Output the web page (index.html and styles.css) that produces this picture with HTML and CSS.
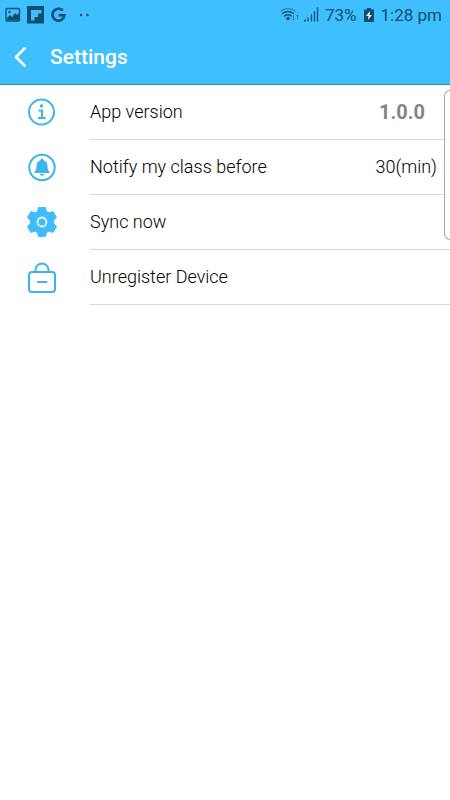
FILE: index.html
```html
<!DOCTYPE html>
<html lang="en">
<head>
<meta charset="utf-8">
<meta name="viewport" content="width=device-width, initial-scale=1">
<title>Settings</title>
<link rel="stylesheet" href="styles.css">
</head>
<body>
<header class="top">
  <div class="status">
    <div class="notices">
      <svg width="16" height="16" viewBox="0 0 16 16" aria-hidden="true"><rect x="1" y="1.500" width="13.500" height="12.500" rx="1" fill="none" stroke="currentColor" stroke-width="1.300"/><path d="M2 11l3-3 2 2 3-4 2 2 2-2v7H2z" fill="currentColor"/><circle cx="4.500" cy="5" r="1.200" fill="currentColor"/></svg>
      <svg width="18" height="18" viewBox="0 0 18 18" aria-hidden="true"><path fill="currentColor" fill-rule="evenodd" d="M0 0h17v17.500H0zM4 4v10.500h3.500V11H11V7.500h3.500V4z"/></svg>
      <svg width="16" height="16" viewBox="0 0 16 16" aria-hidden="true"><path d="M11.800 3.500A6 6 0 1 0 13.500 8.200H7.700" fill="none" stroke="currentColor" stroke-width="2.600"/></svg>
      <svg class="more" width="12" height="16" viewBox="0 0 12 16" aria-hidden="true"><circle cx="2" cy="8" r="1.200" fill="currentColor"/><circle cx="8.500" cy="8" r="1.200" fill="currentColor"/></svg>
    </div>
    <div class="system">
      <svg width="21" height="16" viewBox="0 0 21 16" aria-hidden="true"><g fill="none" stroke="currentColor" stroke-width="1.400" stroke-linecap="round"><path d="M1 4Q8-1 15 4" opacity=".5"/><path d="M2.500 6.500Q8 2.500 13.500 6.500M4.500 9Q8 6.500 11.500 9"/></g><circle cx="8" cy="11.500" r="1.700" fill="currentColor"/><path d="M13.500 8v5M12 11.500l1.500 1.500 1.500-1.500M17.500 13V8M16 9.500L17.500 8 19 9.500" fill="none" stroke="currentColor" opacity=".45"/></svg>
      <svg width="16" height="16" viewBox="0 0 16 16" aria-hidden="true"><path d="M1.500 14l1-1M5 14v-3M8.500 14V8M11.500 14V5M14.500 14V1" fill="none" stroke="currentColor" stroke-width="1.300" stroke-linecap="round"/></svg>
      <span class="percent">73%</span>
      <svg width="12" height="16" viewBox="0 0 12 16" aria-hidden="true"><path d="M4 1h4v1.500h3V15H1V2.500h3z" fill="currentColor"/><path d="M7 4L3 9h2.500L5 13l4-5H6.500z" fill="#e8f8ff"/></svg>
      <time>1:28 pm</time>
    </div>
  </div>
  <div class="bar">
    <button class="back" type="button" aria-label="Back"><svg width="16" height="22" viewBox="0 0 16 22" aria-hidden="true"><path d="M12.500 2.500L4 11l8.500 8.500" fill="none" stroke="currentColor" stroke-width="2.600" stroke-linecap="round" stroke-linejoin="round"/></svg></button>
    <h1>Settings</h1>
  </div>
</header>
<main>
  <ul class="list">
    <li class="row">
      <svg class="icon" viewBox="0 0 32 32" aria-hidden="true"><circle cx="15.500" cy="16" r="12.500" fill="none" stroke="currentColor" stroke-width="2"/><circle cx="15.500" cy="10" r="1.800" fill="currentColor"/><path d="M12.500 14.500h3.500v7.500M12 22h7.500" fill="none" stroke="currentColor" stroke-width="2"/></svg>
      <div class="cell"><span>App version</span><span class="version">1.0.0</span></div>
    </li>
    <li class="row">
      <svg class="icon" viewBox="0 0 32 32" aria-hidden="true"><circle cx="16" cy="16.500" r="12.700" fill="none" stroke="currentColor" stroke-width="2"/><path d="M16 7.500q1.500 0 1.500 1.700c3 .8 4 3.300 4 5.800 0 3 .5 4.500 2 6v1h-15v-1c1.500-1.500 2-3 2-6 0-2.500 1-5 4-5.800q0-1.700 1.500-1.700zM13.500 23h5q-.5 1.800-2.500 1.800T13.500 23z" fill="currentColor"/></svg>
      <div class="cell"><span id="notify">Notify my class before</span><button class="minutes" type="button" aria-describedby="notify">30(min)</button></div>
    </li>
    <li class="row">
      <svg class="icon gear" viewBox="0 0 32 32" aria-hidden="true"><path d="M12.500 1.500h7l1 4 2.500 1.400 4-1.400 3.500 6-3 3v3l3 3-3.500 6-4-1.400-2.500 1.400-1 4h-7l-1-4L9 25.100l-4 1.400-3.500-6 3-3v-3l-3-3 3.500-6 4 1.400 2.500-1.400z" fill="currentColor" stroke="currentColor" stroke-linejoin="round"/><circle cx="16" cy="16" r="4.500" fill="none" stroke="#e5f8ff" stroke-width="1.800"/></svg>
      <div class="cell"><button type="button">Sync now</button></div>
    </li>
    <li class="row">
      <svg class="icon" viewBox="0 0 32 32" aria-hidden="true"><g fill="none" stroke="currentColor" stroke-width="2" stroke-linecap="round"><rect x="3" y="11" width="26" height="20" rx="3"/><path d="M9.500 10.500V9a6.500 6.500 0 0 1 13 0v1.500M12 21h8.500"/></g></svg>
      <div class="cell"><button type="button">Unregister Device</button></div>
    </li>
  </ul>
  <div class="edge" aria-hidden="true"></div>
</main>
</body>
</html>
```
FILE: styles.css
```css
* { box-sizing: border-box; }

body {
  margin: 0;
  background: #fff;
  color: #000;
  font-family: Roboto, "Liberation Sans", sans-serif;
  font-size: 18px;
  font-weight: 350;
  line-height: 24px;
}

button {
  margin: 0;
  padding: 0;
  border: 0;
  background: none;
  color: inherit;
  font: inherit;
  cursor: pointer;
}

svg { display: block; flex: none; }

.top {
  background: #40bfff;
  border-bottom: 1px solid #238fc2;
}

.status {
  display: flex;
  justify-content: space-between;
  align-items: center;
  height: 30px;
  padding: 0 8px 0 5px;
  color: #0d4f70;
  font-size: 17px;
  font-weight: 400;
}

.notices, .system { display: flex; align-items: center; }
.notices { gap: 6px; }
.more { margin-left: 6px; }
.system { gap: 2px; }
.percent { margin: 0 4px; }
.system time { margin-left: 4px; }

.bar {
  display: flex;
  align-items: center;
  height: 54px;
  padding-left: 12px;
  color: #fff;
}

.back { width: 38px; }

h1 {
  margin: 0;
  font-size: 21px;
  font-weight: 500;
  line-height: 28px;
}

main { position: relative; }

.list {
  margin: 0;
  padding: 0;
  list-style: none;
}

.row {
  display: flex;
  align-items: center;
  height: 55px;
  padding-left: 26px;
}

.icon {
  width: 32px;
  height: 32px;
  margin-right: 32px;
  margin-bottom: 2px;
  color: #3eb4ec;
}

.gear { color: #40bbfb; }

.cell {
  display: flex;
  flex: 1;
  align-items: center;
  justify-content: space-between;
  align-self: stretch;
  border-bottom: 1px solid #d8d8d8;
}

.version {
  margin-right: 25px;
  color: #858585;
  font-size: 20px;
  font-weight: 700;
}

.minutes { margin-right: 13px; }

.edge {
  position: absolute;
  top: 5px;
  right: 0;
  width: 6px;
  height: 150px;
  border: 1px solid #aaa;
  border-right: 0;
  border-radius: 6px 0 0 6px;
  background: #fff;
}
```
